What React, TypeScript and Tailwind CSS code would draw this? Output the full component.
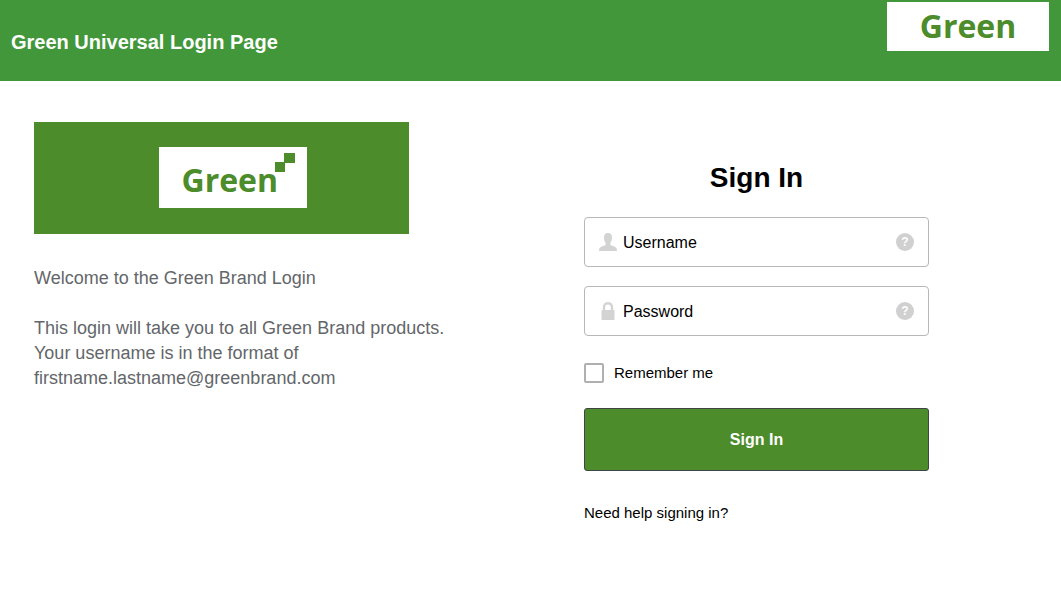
import type { ReactNode } from "react";

function UserIcon() {
  return (
    <svg viewBox="0 0 18 18" className="h-[18px] w-[18px]" fill="#d3d3d3" aria-hidden="true">
      <path d="M9 0C6.200 0 5 1.700 5 4.400C5 6.500 5.600 8.600 6.600 9.800V11.400C6.200 12.400 4.400 12.800 2.700 13.400C0.900 14.100 0 15.300 0 18H18C18 15.300 17.100 14.100 15.300 13.400C13.600 12.800 11.800 12.400 11.400 11.400V9.800C12.400 8.600 13 6.500 13 4.400C13 1.700 11.800 0 9 0Z" />
    </svg>
  );
}

function LockIcon() {
  return (
    <svg viewBox="0 0 18 18" className="h-[18px] w-[18px]" aria-hidden="true">
      <path d="M5 9V5.200C5 2.700 6.500 1.200 9 1.200S13 2.700 13 5.200V9" fill="none" stroke="#d3d3d3" strokeWidth="2.400" />
      <rect x="2.500" y="8" width="13" height="10" rx="1" fill="#d3d3d3" />
    </svg>
  );
}

type FieldProps = { id: string; label: string; type: string; icon: ReactNode };

function Field({ id, label, type, icon }: FieldProps) {
  return (
    <div className="flex h-[50px] items-center rounded border border-[#b7b7b7] bg-white px-[14px]">
      {icon}
      <input
        id={id}
        type={type}
        aria-label={label}
        placeholder={label}
        className="ml-[6px] min-w-0 flex-1 bg-transparent pt-[2px] text-[16px] leading-6 text-black outline-none placeholder:text-black placeholder:opacity-100"
      />
      <button
        type="button"
        aria-label={`${label} help`}
        className="flex h-[18px] w-[18px] items-center justify-center rounded-full bg-[#d0d0d0] text-[12px] leading-none font-bold text-white"
      >
        ?
      </button>
    </div>
  );
}

export default function App() {
  return (
    <div className="min-h-screen bg-white font-['Liberation_Sans',Arial,sans-serif] text-black">
      <header className="flex h-[81px] items-start justify-between bg-[#41973a] pt-[2px] pr-3 pl-[11px]">
        <h1 className="mt-[26px] text-[20px] leading-7 font-bold text-white">Green Universal Login Page</h1>
        <div className="flex h-[49px] w-[162px] items-center justify-center bg-white pb-[2px] font-['Open_Sans',sans-serif] text-[32px] leading-none font-bold text-[#4c8c2b]">
          Green
        </div>
      </header>

      <main className="grid grid-cols-[452px_1fr]">
        <section className="pt-[41px] pl-[34px]">
          <div className="flex h-[112px] w-[375px] items-center justify-center bg-[#4c8c2b] pb-[2px] pl-[22px]">
            <div className="relative flex h-[61px] w-[148px] items-end bg-white pb-[12px] pl-[23px] font-['Open_Sans',sans-serif] text-[32px] leading-none font-bold text-[#4c8c2b]">
              Green
              <svg viewBox="0 0 20 19" className="absolute top-[6px] right-[12px] h-[19px] w-[20px]" fill="#4c8c2b" aria-hidden="true">
                <rect x="9" y="0" width="11" height="10" />
                <rect x="0" y="9" width="10" height="10" />
              </svg>
            </div>
          </div>
          <div className="mt-8 text-[18px] leading-[25px] text-[#63666a]">
            <p>Welcome to the Green Brand Login</p>
            <p className="mt-[25px]">
              This login will take you to all Green Brand products.
              <br />
              Your username is in the format of
              <br />
              firstname.lastname@greenbrand.com
            </p>
          </div>
        </section>

        <section className="flex justify-center pt-[81px]">
          <form className="w-[345px]" onSubmit={(e) => e.preventDefault()}>
            <h2 className="text-center text-[28px] leading-8 font-bold">Sign In</h2>
            <div className="mt-[23px] flex flex-col gap-[19px]">
              <Field id="username" label="Username" type="text" icon={<UserIcon />} />
              <Field id="password" label="Password" type="password" icon={<LockIcon />} />
            </div>
            <div className="mt-[27px] flex items-center gap-[10px] text-[15px] leading-5">
              <input
                id="remember"
                type="checkbox"
                className="h-5 w-5 appearance-none rounded-[2px] border-2 border-[#b0b0b0] bg-white checked:bg-[#4c8c2b]"
              />
              <label htmlFor="remember">Remember me</label>
            </div>
            <button
              type="submit"
              className="mt-[25px] h-[63px] w-full rounded-[3px] border border-[#3f4444] bg-[#4c8c2b] text-[16px] font-bold text-white"
            >
              Sign In
            </button>
            <a href="#help" className="mt-8 inline-block text-[15px] leading-5">
              Need help signing in?
            </a>
          </form>
        </section>
      </main>
    </div>
  );
}
